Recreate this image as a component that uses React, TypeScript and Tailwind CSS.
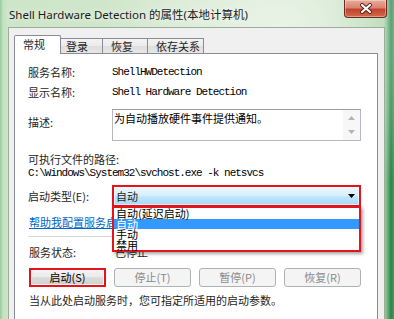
import React from 'react'

const mono = "font-['Liberation_Mono',monospace] text-[11px] tracking-[-1px] text-black"
const red = 'border-[#e5141b]'

function CloseButton() {
  return (
    <div className="mr-[7px] flex h-[18px] w-[43px] items-center justify-center rounded-b-[4px] border border-t-0 border-[#6a2c22] bg-[linear-gradient(#e9ab9a,#d98470_45%,#c4432d_55%,#cf6a4c)] shadow-[inset_0_0_0_1px_rgba(255,255,255,0.35)]">
      <svg width="14" height="11" viewBox="0 0 14 11">
        <path d="M3 2 L11 9 M11 2 L3 9" stroke="#5a2218" strokeWidth="4" strokeLinecap="round" />
        <path d="M3 2 L11 9 M11 2 L3 9" stroke="#ffffff" strokeWidth="2.2" strokeLinecap="round" />
      </svg>
    </div>
  )
}

function Tabs() {
  return (
    <div className="flex h-[18px] items-end">
      <div className="relative z-10 -mb-px h-[19px] w-[47px] rounded-t-[2px] border-x border-t border-[#898c95] bg-white pl-[8px] pt-[1px] leading-[15px]">
        常规
      </div>
      <div className="-ml-px h-[15px] w-[43px] border-r border-t border-[#898c95] bg-[linear-gradient(#f3f3f3,#ebebeb_50%,#dedede_50%,#e6e6e6)] pl-[6px] leading-[14px]">
        登录
      </div>
      <div className="h-[15px] w-[45px] border-r border-t border-[#898c95] bg-[linear-gradient(#f3f3f3,#ebebeb_50%,#dedede_50%,#e6e6e6)] pl-[8px] leading-[14px]">
        恢复
      </div>
      <div className="h-[15px] w-[56px] border-r border-t border-[#898c95] bg-[linear-gradient(#f3f3f3,#ebebeb_50%,#dedede_50%,#e6e6e6)] pl-[8px] leading-[14px]">
        依存关系
      </div>
    </div>
  )
}

function Arrow({ up }: { up?: boolean }) {
  return (
    <svg width="7" height="4" viewBox="0 0 7 4">
      <path d={up ? 'M0 4 L3.5 0 L7 4 Z' : 'M0 0 L3.5 4 L7 0 Z'} fill="#b4b4b4" />
    </svg>
  )
}

function StartType() {
  const items = ['自动(延迟启动)', '自动', '手动', '禁用']
  return (
    <div className="mt-[5px] flex h-[22px] items-center">
      <div className="w-[84px]">启动类型(E):</div>
      <div className={`relative flex-1 border-2 ${red}`}>
        <div className="flex h-[18px] items-center justify-between bg-[linear-gradient(#eaf6fd,#d9f0fc_45%,#bee6fd_55%,#a7d9f5)] pl-[2px] pr-[4px] shadow-[inset_0_0_0_1px_rgba(255,255,255,0.6)]">
          <span>自动</span>
          <svg width="7" height="4" viewBox="0 0 7 4">
            <path d="M0 0 L3.5 4 L7 0 Z" fill="#000" />
          </svg>
        </div>
        {/* open list, drawn over the link and status below */}
        <div className={`absolute -left-[2px] top-[19px] z-20 h-[46px] w-[249px] border-2 ${red} bg-white shadow-[2px_2px_3px_rgba(0,0,0,0.35)]`}>
          {items.map((t, i) => (
            <div
              key={t}
              className={
                i === 1
                  ? 'h-[10.5px] bg-[#3399ff] pl-[2px] leading-[10.5px] text-white'
                  : 'h-[10.5px] pl-[2px] leading-[10.5px] text-black'
              }
            >
              {t}
            </div>
          ))}
        </div>
      </div>
    </div>
  )
}

function Panel() {
  return (
    <div className="h-[300px] border border-[#898c95] bg-white pl-[13px] pr-[16px] pt-[10px]">
      <div className="flex h-[16px] items-center">
        <div className="w-[84px]">服务名称:</div>
        <div className={mono}>ShellHWDetection</div>
      </div>
      <div className="mt-[4px] flex h-[16px] items-center">
        <div className="w-[84px]">显示名称:</div>
        <div className={mono}>Shell Hardware Detection</div>
      </div>

      <div className="mt-[9px] flex">
        <div className="w-[84px] pt-[5px] leading-[16px]">描述:</div>
        <div className="flex h-[32px] flex-1 border border-[#b5b8be] border-t-[#9a9da3] bg-white">
          <div className="flex-1 pl-[1px] pt-[1px] leading-[14px] text-black">为自动播放硬件事件提供通知。</div>
          <div className="flex w-[17px] flex-col items-center justify-between bg-[#f7f7f7] py-[6px]">
            <Arrow up />
            <Arrow />
          </div>
        </div>
      </div>

      <div className="mt-[11px] leading-[14px]">可执行文件的路径:</div>
      <div className={`${mono} leading-[14px]`}>C:\Windows\System32\svchost.exe -k netsvcs</div>

      <StartType />

      <div className="mt-[8px] pl-[1px] leading-[14px]">
        <span className="text-[#0066cc] underline">帮助我配置服务启动选项。</span>
      </div>

      <div className="mt-[7px] border-t border-[#d5d9dd]" />

      <div className="mt-[8px] flex pl-[1px] leading-[14px]">
        <div className="w-[85px]">服务状态:</div>
        <div className="pl-[1px]">已停止</div>
      </div>

      <div className="mt-[9px] grid h-[18px] grid-cols-4 gap-[8px] pl-[1px]">
        <div className={`border-2 ${red}`}>
          <div className="flex h-full items-center justify-center bg-[linear-gradient(#f2f2f2,#ebebeb_50%,#dddddd_50%,#cfcfcf)] leading-[12px] text-black shadow-[inset_0_0_0_1px_rgba(255,255,255,0.8)]">
            启动(S)
          </div>
        </div>
        <div className="flex items-center justify-center rounded-[3px] border border-[#adb2b5] bg-[#f4f4f4] text-[#8a8a8a]">停止(T)</div>
        <div className="flex items-center justify-center rounded-[3px] border border-[#adb2b5] bg-[#f4f4f4] text-[#8a8a8a]">暂停(P)</div>
        <div className="flex items-center justify-center rounded-[3px] border border-[#adb2b5] bg-[#f4f4f4] text-[#8a8a8a]">恢复(R)</div>
      </div>

      <div className="mt-[7px] pl-[1px] leading-[14px]">当从此处启动服务时，您可指定所适用的启动参数。</div>
    </div>
  )
}

export default function App() {
  return (
    <div className="relative h-[319px] w-[394px] overflow-hidden bg-[radial-gradient(ellipse_at_72%_10%,rgba(255,255,255,0.6),transparent_45%),linear-gradient(90deg,#95cb9f_0px,#c5e1c0_3px,#cde5c8_8px,#d2e7cd_200px,#c6e1c1_330px,#a9d3a6_384px,#5fae76_388px,#2f8049_391px,#4c9b62_394px)] font-['Noto_Sans_CJK_SC',sans-serif] text-[11px] text-[#1e1e1e]">
      <div className="flex h-[27px] items-start justify-between">
        <div className="pl-[9px] pt-[6px] font-['Noto_Sans','Noto_Sans_CJK_SC',sans-serif] text-[11.5px] leading-[18px] text-[#1b1b1b] [text-shadow:0_0_6px_#ffffff]">
          Shell Hardware Detection 的属性(本地计算机)
        </div>
        <CloseButton />
      </div>
      <div className="ml-[8px] mr-[9px] h-[292px] border-x border-t border-[#9aae9a] bg-[#f0f0f0] pl-[5px] pr-[6px] pt-[7px]">
        <Tabs />
        <Panel />
      </div>
    </div>
  )
}
